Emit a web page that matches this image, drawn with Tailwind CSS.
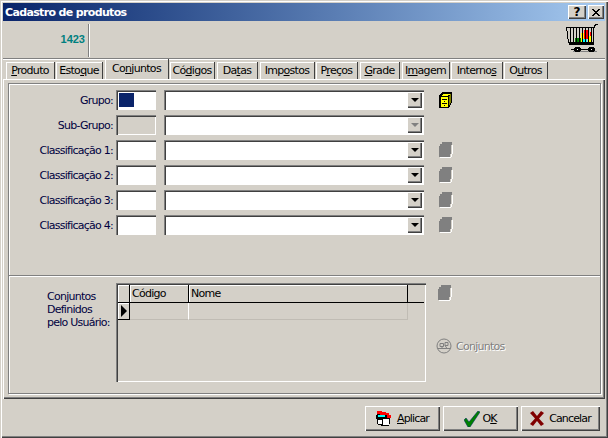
<!DOCTYPE html>
<html lang="pt">
<head>
<meta charset="UTF-8">
<title>Cadastro de produtos</title>
<script src="https://cdn.jsdelivr.net/npm/@tailwindcss/browser@4"></script>
</head>
<body class="m-0 overflow-hidden bg-[#d4d0c8]">
<div class="w-[608px] h-[438px] flex flex-col p-[3px] bg-[#d4d0c8] text-[11px] leading-[13px] text-black font-['DejaVu_Sans',sans-serif] shadow-[inset_1px_1px_0_#d4d0c8,inset_2px_2px_0_#fff,inset_-1px_-1px_0_#404040,inset_-2px_-2px_0_#808080]">

  <!-- title bar -->
  <div class="h-[18px] shrink-0 flex items-center justify-between pl-[2px] pr-[1px] bg-gradient-to-r from-[#0a246a] to-[#a6caf0]">
    <span class="text-white font-bold text-[11px] tracking-[-0.65px]">Cadastro de produtos</span>
    <div class="flex gap-[2px]">
      <div class="w-[18px] h-[14px] flex items-center justify-center bg-[#d4d0c8] font-bold text-[12px] shadow-[inset_1px_1px_0_#fff,inset_-1px_-1px_0_#404040,inset_-2px_-2px_0_#808080]">?</div>
      <div class="w-[16px] h-[14px] flex items-center justify-center bg-[#d4d0c8] shadow-[inset_1px_1px_0_#fff,inset_-1px_-1px_0_#404040,inset_-2px_-2px_0_#808080]">
        <svg width="8" height="7" viewBox="0 0 8 7" shape-rendering="crispEdges"><path d="M0 0h2v1h1v1h2V1h1V0h2v1H7v1H6v1H5v1h1v1h1v1h1v1H6V6H5V5H3v1H2v1H0V6h1V5h1V4h1V3H2V2H1V1H0z"/></svg>
      </div>
    </div>
  </div>

  <!-- header strip -->
  <div class="h-[38px] shrink-0 flex justify-between border-b border-[#808080] shadow-[0_1px_0_#fff]">
    <div class="w-[86px] mt-[3px] mb-[1px] pb-[2px] flex items-center justify-end pr-[3px] border-r border-[#808080] shadow-[1px_0_0_#fff] text-[#008080] font-bold font-['Liberation_Sans',sans-serif] text-[11px]">1423</div>
    <svg class="mr-[6px] mt-[1px]" width="34" height="33" viewBox="0 0 34 33" shape-rendering="crispEdges">
      <path fill="#d4d0c8" d="M1.500 5.500h27v15h-25z"/>
      <path fill="#008000" d="M10 16h7v5h-7z"/>
      <path fill="#ffff00" d="M16 11h3v10h-3zM24 14h3v7h-3z"/>
      <path fill="#ff0000" d="M19 8h5v9h-5zM25 10h2v4h-2z"/>
      <path fill="#00ffff" d="M17 17h5v4h-5z"/>
      <path fill="none" stroke="#000" d="M1.500 5.500h27v15h-25z"/>
      <path stroke="#000" d="M5.500 5v16M8.500 5v16M11.500 5v16M14.500 5v16M17.500 5v16M20.500 5v16M23.500 5v16M26.500 5v16"/>
      <path fill="none" stroke="#000" d="M28.500 21.500V6.500l2-4h2"/>
      <path stroke="#000" stroke-width="2" d="M4 22h25"/>
      <path fill="#808080" d="M8 29h24v1H8z"/>
      <path fill="#000" d="M10 25h5v1h1v3h-1v1h-5v-1H9v-3h1zM24 25h5v1h1v3h-1v1h-5v-1h-1v-3h1zM6 27h3v1H6zM16 27h7v1h-7z"/>
      <path fill="#fff" d="M12 27h1v1h-1zM26 27h1v1h-1z"/>
    </svg>
  </div>

  <!-- tabs -->
  <div class="h-[20px] shrink-0 flex items-end pl-[3px] tracking-[-0.7px]">
    <div class="w-[49px] h-[17px] flex items-center justify-center bg-[#d4d0c8] border-r border-[#404040] shadow-[inset_1px_1px_0_#fff]"><span><u>P</u>roduto</span></div>
    <div class="w-[47px] ml-[1px] h-[17px] flex items-center justify-center border-r border-[#404040] shadow-[inset_1px_1px_0_#fff]"><span>Esto<u>q</u>ue</span></div>
    <div class="w-[64px] ml-[2px] h-[20px] pb-[2px] flex items-center justify-center border-r border-[#404040] shadow-[inset_1px_1px_0_#fff]"><span>Co<u>n</u>juntos</span></div>
    <div class="w-[45px] ml-[1px] h-[17px] flex items-center justify-center border-r border-[#404040] shadow-[inset_1px_1px_0_#fff]"><span>Có<u>d</u>igos</span></div>
    <div class="w-[41px] ml-[2px] h-[17px] flex items-center justify-center border-r border-[#404040] shadow-[inset_1px_1px_0_#fff]"><span>Da<u>t</u>as</span></div>
    <div class="w-[55px] ml-[2px] h-[17px] flex items-center justify-center border-r border-[#404040] shadow-[inset_1px_1px_0_#fff]"><span>Imp<u>o</u>stos</span></div>
    <div class="w-[42px] ml-[1px] h-[17px] flex items-center justify-center border-r border-[#404040] shadow-[inset_1px_1px_0_#fff]"><span>P<u>r</u>eços</span></div>
    <div class="w-[40px] ml-[2px] h-[17px] flex items-center justify-center border-r border-[#404040] shadow-[inset_1px_1px_0_#fff]"><span><u>G</u>rade</span></div>
    <div class="w-[48px] ml-[2px] h-[17px] flex items-center justify-center border-r border-[#404040] shadow-[inset_1px_1px_0_#fff]"><span>I<u>m</u>agem</span></div>
    <div class="w-[52px] ml-[1px] h-[17px] flex items-center justify-center border-r border-[#404040] shadow-[inset_1px_1px_0_#fff]"><span>Interno<u>s</u></span></div>
    <div class="w-[44px] ml-[1px] h-[17px] flex items-center justify-center border-r border-[#404040] shadow-[inset_1px_1px_0_#fff]"><span>O<u>u</u>tros</span></div>
  </div>

  <!-- page -->
  <div class="h-[320px] shrink-0 pt-[4px] pl-[5px] pr-[4px] pb-[5px] shadow-[inset_1px_1px_0_#fff,inset_-1px_-1px_0_#404040,inset_-2px_-2px_0_#808080]">
    <div class="h-full flex flex-col tracking-[-0.75px] border border-[#808080] shadow-[inset_1px_1px_0_#fff,1px_1px_0_#fff]">
      <div class="h-[191px] shrink-0 pt-[6px] flex flex-col gap-[5px]">

        <div class="h-[20px] flex items-center">
          <span class="w-[104px] text-right text-[#000040]">Grupo:</span>
          <div class="ml-[3px] w-[40px] h-[20px] p-[3px] bg-white shadow-[inset_1px_1px_0_#808080,inset_2px_2px_0_#404040,inset_-1px_-1px_0_#fff]"><div class="w-[15px] h-[14px] bg-[#0a246a]"></div></div>
          <div class="ml-[8px] w-[260px] h-[20px] flex justify-end items-center pr-[2px] bg-white shadow-[inset_1px_1px_0_#808080,inset_2px_2px_0_#404040,inset_-1px_-1px_0_#fff]">
            <div class="w-[15px] h-[16px] flex items-center justify-center bg-[#d4d0c8] shadow-[inset_1px_1px_0_#fff,inset_-1px_-1px_0_#404040,inset_-2px_-2px_0_#808080]"><div class="w-0 h-0 border-x-[4px] border-x-transparent border-t-[4px] border-t-black"></div></div>
          </div>
          <svg class="ml-[15px]" width="13" height="16" viewBox="0 0 13 16" shape-rendering="crispEdges">
            <path fill="#000" d="M3 0h10v11h-1v2h-1v2h-1v1H0V3h1V2h1V1h1z"/>
            <path fill="#ffff00" d="M2 5h7v10H2z"/>
            <path fill="#ffff00" d="M4 2h7v1H4zM3 3h6v1H3z"/>
            <path fill="#808000" d="M11 2h1v9h-1v2h-1V4h1z"/>
            <path fill="#000" d="M3 7h5v1H3zM3 11h5v1H3zM5 9h1v1H5zM5 13h1v1H5z"/>
          </svg>
        </div>

        <div class="h-[20px] flex items-center">
          <span class="w-[104px] text-right text-[#000040]">Sub-Grupo:</span>
          <div class="ml-[3px] w-[40px] h-[20px] bg-[#d4d0c8] shadow-[inset_1px_1px_0_#808080,inset_2px_2px_0_#404040,inset_-1px_-1px_0_#fff]"></div>
          <div class="ml-[8px] w-[260px] h-[20px] flex justify-end items-center pr-[2px] bg-white shadow-[inset_1px_1px_0_#808080,inset_2px_2px_0_#404040,inset_-1px_-1px_0_#fff]">
            <div class="w-[15px] h-[16px] flex items-center justify-center bg-[#d4d0c8] shadow-[inset_1px_1px_0_#fff,inset_-1px_-1px_0_#404040,inset_-2px_-2px_0_#808080]"><div class="w-0 h-0 border-x-[4px] border-x-transparent border-t-[4px] border-t-[#808080]"></div></div>
          </div>
        </div>

        <div class="h-[20px] flex items-center">
          <span class="w-[104px] text-right text-[#000040]">Classificação 1:</span>
          <div class="ml-[3px] w-[40px] h-[20px] bg-white shadow-[inset_1px_1px_0_#808080,inset_2px_2px_0_#404040,inset_-1px_-1px_0_#fff]"></div>
          <div class="ml-[8px] w-[260px] h-[20px] flex justify-end items-center pr-[2px] bg-white shadow-[inset_1px_1px_0_#808080,inset_2px_2px_0_#404040,inset_-1px_-1px_0_#fff]">
            <div class="w-[15px] h-[16px] flex items-center justify-center bg-[#d4d0c8] shadow-[inset_1px_1px_0_#fff,inset_-1px_-1px_0_#404040,inset_-2px_-2px_0_#808080]"><div class="w-0 h-0 border-x-[4px] border-x-transparent border-t-[4px] border-t-black"></div></div>
          </div>
          <svg class="ml-[15px]" width="14" height="16" viewBox="0 0 14 16" shape-rendering="crispEdges"><path fill="#808080" d="M3 0h10v3h-1v9h-1v3H0V4h1V2h2z"/><path fill="#fff" d="M13 3h1v9h-1v3h-1v1H1v-1h11v-3h1z"/></svg>
        </div>

        <div class="h-[20px] flex items-center">
          <span class="w-[104px] text-right text-[#000040]">Classificação 2:</span>
          <div class="ml-[3px] w-[40px] h-[20px] bg-white shadow-[inset_1px_1px_0_#808080,inset_2px_2px_0_#404040,inset_-1px_-1px_0_#fff]"></div>
          <div class="ml-[8px] w-[260px] h-[20px] flex justify-end items-center pr-[2px] bg-white shadow-[inset_1px_1px_0_#808080,inset_2px_2px_0_#404040,inset_-1px_-1px_0_#fff]">
            <div class="w-[15px] h-[16px] flex items-center justify-center bg-[#d4d0c8] shadow-[inset_1px_1px_0_#fff,inset_-1px_-1px_0_#404040,inset_-2px_-2px_0_#808080]"><div class="w-0 h-0 border-x-[4px] border-x-transparent border-t-[4px] border-t-black"></div></div>
          </div>
          <svg class="ml-[15px]" width="14" height="16" viewBox="0 0 14 16" shape-rendering="crispEdges"><path fill="#808080" d="M3 0h10v3h-1v9h-1v3H0V4h1V2h2z"/><path fill="#fff" d="M13 3h1v9h-1v3h-1v1H1v-1h11v-3h1z"/></svg>
        </div>

        <div class="h-[20px] flex items-center">
          <span class="w-[104px] text-right text-[#000040]">Classificação 3:</span>
          <div class="ml-[3px] w-[40px] h-[20px] bg-white shadow-[inset_1px_1px_0_#808080,inset_2px_2px_0_#404040,inset_-1px_-1px_0_#fff]"></div>
          <div class="ml-[8px] w-[260px] h-[20px] flex justify-end items-center pr-[2px] bg-white shadow-[inset_1px_1px_0_#808080,inset_2px_2px_0_#404040,inset_-1px_-1px_0_#fff]">
            <div class="w-[15px] h-[16px] flex items-center justify-center bg-[#d4d0c8] shadow-[inset_1px_1px_0_#fff,inset_-1px_-1px_0_#404040,inset_-2px_-2px_0_#808080]"><div class="w-0 h-0 border-x-[4px] border-x-transparent border-t-[4px] border-t-black"></div></div>
          </div>
          <svg class="ml-[15px]" width="14" height="16" viewBox="0 0 14 16" shape-rendering="crispEdges"><path fill="#808080" d="M3 0h10v3h-1v9h-1v3H0V4h1V2h2z"/><path fill="#fff" d="M13 3h1v9h-1v3h-1v1H1v-1h11v-3h1z"/></svg>
        </div>

        <div class="h-[20px] flex items-center">
          <span class="w-[104px] text-right text-[#000040]">Classificação 4:</span>
          <div class="ml-[3px] w-[40px] h-[20px] bg-white shadow-[inset_1px_1px_0_#808080,inset_2px_2px_0_#404040,inset_-1px_-1px_0_#fff]"></div>
          <div class="ml-[8px] w-[260px] h-[20px] flex justify-end items-center pr-[2px] bg-white shadow-[inset_1px_1px_0_#808080,inset_2px_2px_0_#404040,inset_-1px_-1px_0_#fff]">
            <div class="w-[15px] h-[16px] flex items-center justify-center bg-[#d4d0c8] shadow-[inset_1px_1px_0_#fff,inset_-1px_-1px_0_#404040,inset_-2px_-2px_0_#808080]"><div class="w-0 h-0 border-x-[4px] border-x-transparent border-t-[4px] border-t-black"></div></div>
          </div>
          <svg class="ml-[15px]" width="14" height="16" viewBox="0 0 14 16" shape-rendering="crispEdges"><path fill="#808080" d="M3 0h10v3h-1v9h-1v3H0V4h1V2h2z"/><path fill="#fff" d="M13 3h1v9h-1v3h-1v1H1v-1h11v-3h1z"/></svg>
        </div>
      </div>

      <!-- bottom section -->
      <div class="flex-1 flex border-t border-[#808080] shadow-[inset_0_1px_0_#fff] pt-[7px]">
        <div class="w-[107px] pl-[38px] pt-[7px] text-[#000040]">Conjuntos<br>Definidos<br>pelo Usuário:</div>
        <div class="w-[310px] h-[99px] p-[2px] flex flex-col shadow-[inset_1px_1px_0_#808080,inset_2px_2px_0_#404040,inset_-1px_-1px_0_#fff]">
          <div class="h-[18px] flex border-b border-black">
            <div class="w-[12px] border-r border-black shadow-[inset_1px_1px_0_#fff]"></div>
            <div class="w-[59px] pl-[2px] flex items-center border-r border-black shadow-[inset_1px_1px_0_#fff]">Código</div>
            <div class="w-[219px] pl-[2px] flex items-center border-r border-black shadow-[inset_1px_1px_0_#fff]">Nome</div>
          </div>
          <div class="h-[17px] flex">
            <div class="w-[12px] flex items-center justify-center border-r border-b border-black shadow-[inset_1px_1px_0_#fff]"><div class="w-0 h-0 border-y-[6px] border-y-transparent border-l-[6px] border-l-black"></div></div>
            <div class="w-[59px] border-r border-b border-r-white border-b-[#c0bcb4]"></div>
            <div class="w-[219px] border-r border-b border-[#c0bcb4]"></div>
          </div>
        </div>
        <div class="ml-[10px] flex flex-col">
          <svg class="ml-[2px] mt-[2px]" width="14" height="16" viewBox="0 0 14 16" shape-rendering="crispEdges"><path fill="#808080" d="M3 0h10v3h-1v9h-1v3H0V4h1V2h2z"/><path fill="#fff" d="M13 3h1v9h-1v3h-1v1H1v-1h11v-3h1z"/></svg>
          <div class="mt-[37px] flex items-center gap-[4px] text-[#808080] [text-shadow:1px_1px_0_#fff]">
            <svg width="16" height="16" viewBox="0 0 16 16" fill="none" stroke="#808080"><circle cx="8" cy="8" r="7"/><path d="M1.500 10.500l13 0M4 5.500h3.500v3H4zM9 4.500h3v3H9zM5 10.500l2-2M11 10.500l-2-3"/></svg>
            <span>Conjuntos</span>
          </div>
        </div>
      </div>
    </div>
  </div>

  <!-- footer -->
  <div class="flex-1 flex justify-end gap-[3px] pt-[7px] pr-[5px] tracking-[-0.85px]">
    <div class="w-[75px] h-[25px] flex items-center justify-center gap-[6px] shadow-[inset_1px_1px_0_#fff,inset_-1px_-1px_0_#404040,inset_-2px_-2px_0_#808080]">
      <svg width="15" height="16" viewBox="0 0 15 16" shape-rendering="crispEdges">
        <path fill="#ff0000" d="M1 0h5v1h4v1h3v2h2v3H3V3H1z"/>
        <path fill="#000" d="M1 3h3v1h7v3h3v6h-1v2H5v-1H2v-1H1V8H0V4h1z"/>
        <path fill="#00ffff" d="M2 4h7v2H2z"/>
        <path fill="#fff" d="M2 9h4v4H2zM7 8h6v6H7z"/>
      </svg>
      <span><u>A</u>plicar</span>
    </div>
    <div class="w-[75px] h-[25px] flex items-center justify-center gap-[2px] shadow-[inset_1px_1px_0_#fff,inset_-1px_-1px_0_#404040,inset_-2px_-2px_0_#808080]">
      <svg width="16" height="16" viewBox="0 0 16 16"><path fill="#008000" stroke="#003060" stroke-width=".6" d="M0 9l2-2 3 4 9-11 2 1-10 15h-2z"/></svg>
      <span>O<u>K</u></span>
    </div>
    <div class="w-[79px] h-[25px] flex items-center justify-center gap-[5px] shadow-[inset_1px_1px_0_#fff,inset_-1px_-1px_0_#404040,inset_-2px_-2px_0_#808080]">
      <svg width="14" height="15" viewBox="0 0 14 15"><path fill="#800000" d="M0 2l3-2 4 5 4-5 3 2-5 5.500 5 5.500-3 2-4-5-4 5-3-2 5-5.500z"/></svg>
      <span>Cancelar</span>
    </div>
  </div>
</div>
</body>
</html>
